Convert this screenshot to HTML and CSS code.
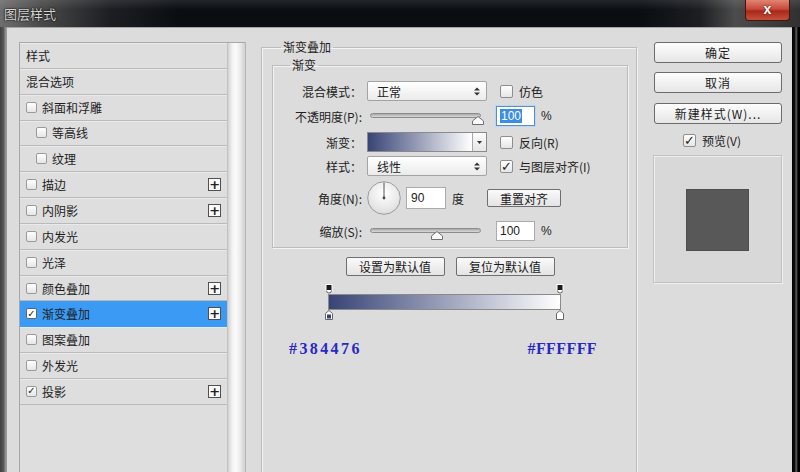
FILE: index.html
```html
<!DOCTYPE html>
<html lang="zh-CN">
<head>
<meta charset="utf-8">
<title>图层样式</title>
<link rel="stylesheet" href="styles.css">
</head>
<body>
<div class="win">
  <div class="titlebar">
    <span class="title">图层样式</span>
    <div class="close">x</div>
  </div>
  <div class="frame">
    <div class="content">
      <div class="leftcol">
        <div class="listbox">
          <div class="list">
            <div class="row head">样式</div>
            <div class="row head">混合选项</div>
            <div class="row chk"><span class="cb"></span>斜面和浮雕</div>
            <div class="row chk sub"><span class="cb"></span>等高线</div>
            <div class="row chk sub"><span class="cb"></span>纹理</div>
            <div class="row chk"><span class="cb"></span>描边<span class="plus">+</span></div>
            <div class="row chk"><span class="cb"></span>内阴影<span class="plus">+</span></div>
            <div class="row chk"><span class="cb"></span>内发光</div>
            <div class="row chk"><span class="cb"></span>光泽</div>
            <div class="row chk"><span class="cb"></span>颜色叠加<span class="plus">+</span></div>
            <div class="row chk sel"><span class="cb on">✓</span>渐变叠加<span class="plus">+</span></div>
            <div class="row chk"><span class="cb"></span>图案叠加</div>
            <div class="row chk"><span class="cb"></span>外发光</div>
            <div class="row chk"><span class="cb on">✓</span>投影<span class="plus">+</span></div>
          </div>
          <div class="scroll"></div>
        </div>
      </div>

      <div class="main">
        <fieldset class="outer">
          <legend class="lg-outer">渐变叠加</legend>
          <fieldset class="inner">
            <legend class="lg-inner">渐变</legend>
            <div class="frow r1">
              <span class="lbl">混合模式：</span>
              <div class="select"><span>正常</span>
                <svg class="updown" width="6" height="9" viewBox="0 0 6 9"><path d="M0 3.5 L3 0.5 L6 3.5Z M0 5.5 L3 8.5 L6 5.5Z" fill="#333"/></svg>
              </div>
              <span class="cb big"></span><span class="cbt">仿色</span>
            </div>
            <div class="frow r2">
              <span class="lbl">不透明度(P):</span>
              <div class="slider">
                <div class="track"></div>
                <svg class="thumb t-op" width="12" height="9" viewBox="0 0 12 9"><path d="M0.5 8.5 L0.5 5 L6 0.5 L11.5 5 L11.5 8.5Z" fill="#fafafa" stroke="#707070"/></svg>
              </div>
              <div class="num focus"><span class="hl">100</span></div>
              <span class="pct">%</span>
            </div>
            <div class="frow r3">
              <span class="lbl">渐变：</span>
              <div class="gsw">
                <div class="gfill"></div>
                <div class="gdrop"><svg width="5" height="3" viewBox="0 0 5 3"><path d="M0 0 L5 0 L2.5 3Z" fill="#333"/></svg></div>
              </div>
              <span class="cb big"></span><span class="cbt">反向(R)</span>
            </div>
            <div class="frow r4">
              <span class="lbl">样式：</span>
              <div class="select"><span>线性</span>
                <svg class="updown" width="6" height="9" viewBox="0 0 6 9"><path d="M0 3.5 L3 0.5 L6 3.5Z M0 5.5 L3 8.5 L6 5.5Z" fill="#333"/></svg>
              </div>
              <span class="cb big on">✓</span><span class="cbt">与图层对齐(I)</span>
            </div>
            <div class="frow r5">
              <span class="lbl">角度(N):</span>
              <svg class="dial" width="34" height="34" viewBox="0 0 34 34">
                <defs>
                  <radialGradient id="dg" cx="50%" cy="35%" r="65%">
                    <stop offset="0" stop-color="#ffffff"/>
                    <stop offset="1" stop-color="#dedede"/>
                  </radialGradient>
                </defs>
                <circle cx="17" cy="17" r="16.3" fill="url(#dg)" stroke="#9a9a9a"/>
                <line x1="17" y1="17" x2="17" y2="1.5" stroke="#555" stroke-width="1"/>
                <circle cx="17" cy="17" r="1.4" fill="#444"/>
              </svg>
              <div class="num angle">90</div>
              <span class="deg">度</span>
              <div class="btn reset">重置对齐</div>
            </div>
            <div class="frow r6">
              <span class="lbl">缩放(S):</span>
              <div class="slider">
                <div class="track"></div>
                <svg class="thumb t-sc" width="12" height="9" viewBox="0 0 12 9"><path d="M0.5 8.5 L0.5 5 L6 0.5 L11.5 5 L11.5 8.5Z" fill="#fafafa" stroke="#707070"/></svg>
              </div>
              <div class="num">100</div>
              <span class="pct">%</span>
            </div>
          </fieldset>

          <div class="defaults">
            <div class="btn dbtn">设置为默认值</div>
            <div class="btn dbtn">复位为默认值</div>
          </div>

          <div class="gedit">
            <div class="gbar"></div>
            <svg class="stop top s-left" width="8" height="10" viewBox="0 0 8 10"><rect x="1" y="0.5" width="6" height="6" fill="#1a1a1a" stroke="#fff"/><path d="M1.5 6.5 A2.5 2.5 0 0 0 6.5 6.5" fill="#fff" stroke="#666"/></svg>
            <svg class="stop top s-right" width="8" height="10" viewBox="0 0 8 10"><rect x="1" y="0.5" width="6" height="6" fill="#1a1a1a" stroke="#fff"/><path d="M1.5 6.5 A2.5 2.5 0 0 0 6.5 6.5" fill="#fff" stroke="#666"/></svg>
            <svg class="stop bot s-left" width="8" height="10" viewBox="0 0 8 10"><path d="M0.5 9.5 L0.5 3.5 L4 0.5 L7.5 3.5 L7.5 9.5Z" fill="#fff" stroke="#666"/><rect x="2" y="4.5" width="4" height="4" fill="#384476"/></svg>
            <svg class="stop bot s-right" width="8" height="10" viewBox="0 0 8 10"><path d="M0.5 9.5 L0.5 3.5 L4 0.5 L7.5 3.5 L7.5 9.5Z" fill="#fff" stroke="#666"/></svg>
          </div>

          <div class="hexes">
            <span class="hex">#384476</span>
            <span class="hex hex-white">#FFFFFF</span>
          </div>
        </fieldset>
      </div>

      <div class="side">
        <div class="sbtn b-ok">确定</div>
        <div class="sbtn b-cancel">取消</div>
        <div class="sbtn b-new">新建样式(W)...</div>
        <div class="preview-chk"><span class="cb big on">✓</span><span class="cbt">预览(V)</span></div>
        <div class="preview">
          <div class="swatch"></div>
        </div>
      </div>
    </div>
  </div>
</div>
</body>
</html>
```

FILE: styles.css
```css
* { box-sizing: border-box; }
html, body { margin: 0; padding: 0; }
body {
  width: 800px;
  height: 472px;
  overflow: hidden;
  background: #000;
  font-family: "Noto Sans CJK SC", "Liberation Sans", sans-serif;
  font-size: 12px;
  color: #1d1d1d;
}
.win {
  width: 800px;
  height: 472px;
  display: flex;
  flex-direction: column;
}
.titlebar {
  height: 27px;
  flex: none;
  display: flex;
  justify-content: space-between;
  align-items: flex-start;
  background:
    linear-gradient(to bottom, rgba(255,255,255,0.10) 0, rgba(255,255,255,0) 10px),
    linear-gradient(to right, #6e6e6e 0, #4a4a4a 40px, #1c1e22 110px, #0a0d12 180px, #0a0d12 640px, #1c1e22 700px, #4c4c4c 735px, #303030 800px);
}
.title {
  margin: 5px 0 0 4px;
  font-size: 13px;
  line-height: 17px;
  color: #d6d6d6;
  text-shadow: 0 0 2px #000, 0 0 1px #000;
}
.close {
  width: 45px;
  height: 21px;
  margin-right: 10px;
  border: 1px solid #4a120c;
  border-top: none;
  border-radius: 0 0 4px 4px;
  background: linear-gradient(#e08572 0, #c9493a 45%, #a8281a 55%, #c4503c 100%);
  color: #fff;
  font-family: "Liberation Sans", sans-serif;
  font-weight: bold;
  font-size: 14px;
  line-height: 18px;
  text-align: center;
  text-shadow: 0 0 2px #5a120a;
}
.frame {
  flex: 1;
  display: flex;
  padding: 0 8px 0 7px;
  background: linear-gradient(to right, #3e3e3e 0, #5a5a5a 4px, #8a8a8a 5px, #9c9c9c 7px, #dcdcdc 7px, #dcdcdc 792px, #000 792px, #111 795px, #6a6a6a 796px, #000 798px);
  min-height: 0;
}
.content {
  flex: 1;
  display: flex;
  align-items: flex-start;
  background: #dcdcdc;
  border-top: 1px solid #a5a5a5;
  overflow: hidden;
}

/* left list */
.leftcol {
  padding: 14px 0 0 12px;
  flex: none;
}
.listbox {
  display: flex;
  width: 227px;
  height: 520px;
  border-left: 1px solid #a8a8a8;
  border-top: 1px solid #a8a8a8;
  border-right: 1px solid #b6b6b6;
}
.list {
  width: 209px;
  background: #dedede;
  border-right: 1px solid #c2c2c2;
}
.scroll {
  width: 17px;
  background: linear-gradient(to right, #d2d2d2 0, #f2f2f2 25%, #fbfbfb 45%, #ececec 70%, #d0d0d0 100%);
  border-radius: 2px;
}
.row {
  height: 25.85px;
  display: flex;
  align-items: center;
  border-bottom: 1px solid #bababa;
  box-shadow: inset 0 1px 0 #eaeaea;
  padding-left: 6px;
  white-space: nowrap;
}
.row.head { padding-left: 6px; }
.row.sub { padding-left: 16px; }
.row.sel {
  background: #3b9bf4;
  border-bottom-color: #3b9bf4;
  box-shadow: none;
}
.cb {
  width: 11px;
  height: 11px;
  flex: none;
  border: 1px solid #9a9a9a;
  border-radius: 2px;
  background: linear-gradient(#ffffff, #e6e6e6);
  margin-right: 5px;
  display: flex;
  align-items: center;
  justify-content: center;
  font-family: "DejaVu Sans", sans-serif;
  font-size: 10px;
  line-height: 1;
  color: #222;
  font-weight: bold;
}
.row.sel .cb { border-color: #666; background: #fff; }
.plus {
  margin-left: auto;
  margin-right: 6px;
  width: 13px;
  height: 13px;
  border: 1px solid #505050;
  background: #fafafa;
  display: flex;
  align-items: center;
  justify-content: center;
  font-family: "DejaVu Sans", sans-serif;
  font-weight: bold;
  font-size: 13px;
  line-height: 1;
  color: #222;
}

/* main */
.main {
  flex: none;
  margin-left: 15px;
  padding-top: 12px;
}
fieldset {
  margin: 0;
  min-width: 0;
  border: 1px solid #bcbcbc;
  box-shadow: inset 1px 1px 0 #f3f3f3, 1px 1px 0 #f3f3f3;
}
legend {
  padding: 0 2px;
  font-size: 12px;
  line-height: 14px;
}
.outer {
  width: 376px;
  height: 560px;
  padding: 0 8px 0 10px;
}
.lg-outer { margin-left: 9px; }
.inner {
  width: 356px;
  margin-top: 4px;
  padding: 0 0 6px 0;
}
.lg-inner { margin-left: 17px; }
.frow {
  display: flex;
  align-items: center;
  height: 20px;
  white-space: nowrap;
}
.r1 { margin-top: 9px; }
.r2 { margin-top: 5px; }
.r3 { margin-top: 6px; }
.r4 { margin-top: 4px; }
.r5 { margin-top: 5px; height: 34px; }
.r6 { margin-top: 6px; }
.lbl {
  width: 89px;
  flex: none;
  text-align: right;
  margin-right: 5px;
  color: #222;
}
.select {
  width: 120px;
  height: 20px;
  flex: none;
  border: 1px solid #a3a3a3;
  border-radius: 2px;
  background: linear-gradient(#ffffff, #ebebeb);
  display: flex;
  align-items: center;
  justify-content: space-between;
  padding: 0 6px 0 9px;
}
.cb.big {
  width: 13px;
  height: 13px;
  margin: 0 6px 0 13px;
  font-size: 13px;
  border-color: #8e8e8e;
}
.cbt { color: #222; }
.slider {
  width: 120px;
  height: 20px;
  flex: none;
  position: relative;
  padding: 7px 6px 0 3px;
}
.track {
  height: 5px;
  border: 1px solid #8c8c8c;
  border-radius: 3px;
  background: linear-gradient(#a8a8a8, #dadada);
}
.thumb { position: absolute; top: 10px; }
.t-op { left: 105px; }
.t-sc { left: 64px; }
.num {
  width: 39px;
  height: 20px;
  flex: none;
  margin-left: 9px;
  border: 1px solid #a9abb1;
  background: #fff;
  display: flex;
  align-items: center;
  padding-left: 3px;
  font-family: "Liberation Sans", sans-serif;
  font-size: 12px;
}
.num.focus {
  border-color: #5b8fc4;
  box-shadow: 0 0 0 1px #b9d6f2;
}
.hl {
  background: #3a8ee6;
  color: #fff;
  padding: 0 1px;
  line-height: 14px;
}
.pct {
  margin-left: 6px;
  font-family: "Liberation Sans", sans-serif;
}
.gsw {
  width: 120px;
  height: 20px;
  flex: none;
  display: flex;
  border: 1px solid #8a8a8a;
}
.gfill {
  flex: 1;
  background: linear-gradient(to right, #384476, #ffffff);
}
.gdrop {
  width: 14px;
  border-left: 1px solid #a8a8a8;
  background: linear-gradient(#fdfdfd, #e6e6e6);
  display: flex;
  align-items: center;
  justify-content: center;
}
.dial { flex: none; }
.num.angle { margin-left: 5px; height: 22px; width: 40px; padding-left: 4px; }
.deg { margin-left: 6px; width: 12px; }
.btn {
  height: 18px;
  flex: none;
  border: 1px solid #6f6f6f;
  border-radius: 2px;
  background: linear-gradient(#fafafa, #e4e4e4);
  display: flex;
  align-items: center;
  justify-content: center;
  color: #1a1a1a;
}
.reset { width: 74px; margin-left: 23px; }
.defaults {
  display: flex;
  justify-content: center;
  gap: 11px;
  margin-top: 9px;
}
.dbtn { width: 99px; height: 19px; }
.gedit {
  position: relative;
  width: 233px;
  margin: 8px 0 0 56px;
  padding: 10px 0;
}
.gbar {
  height: 16px;
  border: 1px solid #8a8a8a;
  background: linear-gradient(to right, #384476, #ffffff);
}
.stop { position: absolute; }
.stop.top { top: 0; }
.stop.bot { bottom: 0; }
.s-left { left: -3px; }
.s-right { right: -3px; }
.hexes {
  display: flex;
  justify-content: space-between;
  width: 325px;
  margin-top: 20px;
  padding-left: 17px;
}
.hex {
  font-family: "Liberation Serif", serif;
  font-weight: bold;
  font-size: 16px;
  line-height: 18px;
  letter-spacing: 2.4px;
  color: #2828c8;
}
.hex-white { letter-spacing: 0.4px; }

/* side */
.side {
  flex: none;
  width: 128px;
  margin-left: 17px;
  padding-top: 14px;
}
.sbtn {
  height: 21px;
  border: 1px solid #6c6c6c;
  border-radius: 3px;
  background: linear-gradient(#fdfdfd, #e6e6e6);
  display: flex;
  align-items: center;
  justify-content: center;
  color: #1a1a1a;
  letter-spacing: 1px;
}
.b-cancel { margin-top: 9px; }
.b-new { margin-top: 10px; }
.preview-chk {
  display: flex;
  align-items: center;
  height: 14px;
  margin-top: 9px;
  padding-left: 16px;
}
.preview {
  margin: 8px 0 0 -1px;
  width: 129px;
  height: 128px;
  border: 1px solid #c2c2c2;
  box-shadow: inset 1px 1px 0 #efefef, 1px 1px 0 #efefef;
  background: #d8d8d8;
  padding: 33px 0 0 32px;
}
.swatch {
  width: 63px;
  height: 62px;
  background: #585858;
  border: 1px solid #4d4d4d;
}
```
